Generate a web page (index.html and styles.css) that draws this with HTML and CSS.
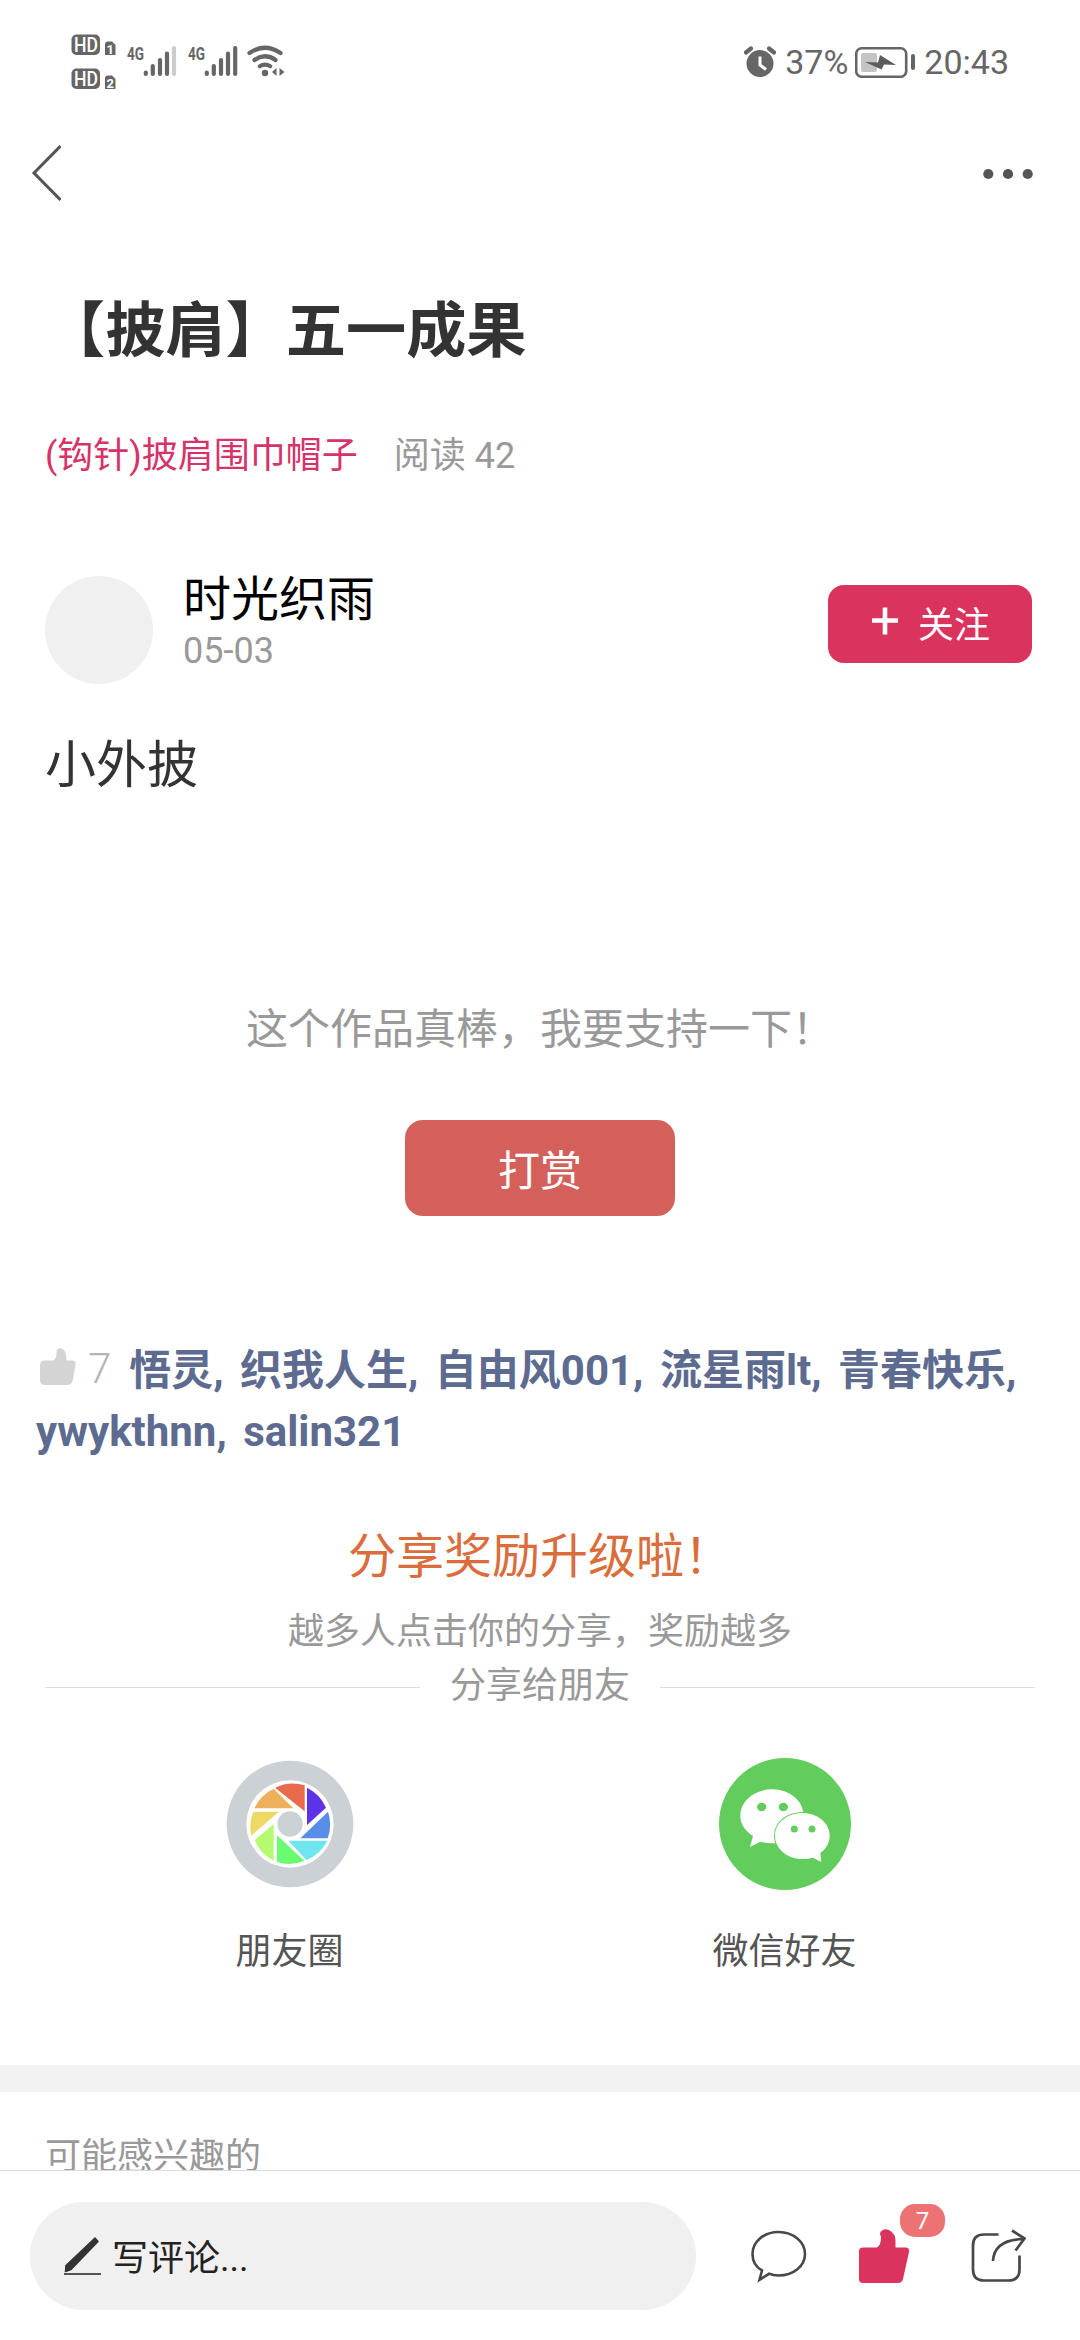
FILE: index.html
```html
<!DOCTYPE html>
<html lang="zh-CN">
<head>
<meta charset="utf-8">
<title>【披肩】五一成果</title>
<link rel="stylesheet" href="styles.css">
</head>
<body>
<div class="screen">
  <div class="viewport">
    <div class="status">
      <svg class="status-left" width="216" height="60" viewBox="71 32 216 60">
        <g fill="#666">
          <rect x="71.5" y="34.5" width="28.5" height="20.5" rx="5"/>
          <rect x="71.5" y="68.5" width="28.5" height="20.5" rx="5"/>
          <path d="M105 44.500q0-3 3-3h4l3.500 3.500v10h-10.500z"/>
          <path d="M105 78.500q0-3 3-3h4l3.500 3.500v10h-10.500z"/>
        </g>
        <g class="hd">
          <text x="74" y="51.500" textLength="24" lengthAdjust="spacingAndGlyphs">HD</text>
          <text x="74" y="85.500" textLength="24" lengthAdjust="spacingAndGlyphs">HD</text>
        </g>
        <g class="sim"><text x="106.500" y="53.500">1</text><text x="106.500" y="87.500">2</text></g>
        <g class="net">
          <text x="127" y="60" textLength="17" lengthAdjust="spacingAndGlyphs">4G</text>
          <text x="188" y="60" textLength="17" lengthAdjust="spacingAndGlyphs">4G</text>
        </g>
        <g stroke="#666" stroke-width="4.200" stroke-linecap="round">
          <path d="M145.800 72.500v1.500M152.800 66v8M160 60v14M167 53.500v20.500M206.800 72.500v1.500M213.800 66v8M221 60v14M228 53.500v20.500M235.200 48v26"/>
          <path d="M174 48v26" stroke="#ccc"/>
        </g>
        <g fill="none" stroke="#666" stroke-width="4.200" stroke-linecap="round">
          <path d="M249.500 53q15.500-10.500 31 0M254.500 60q10.500-7.500 21 0M259.800 66.200q5.200-3 10.400 0"/>
        </g>
        <circle cx="265" cy="73" r="3.200" fill="#666"/>
        <path d="M276.500 68v8l-4.500-4zM279.500 68v8l5-4z" fill="#666"/>
      </svg>
      <div class="status-right">
        <svg width="32" height="32" viewBox="744 45 32 32">
          <circle cx="760" cy="62.500" r="13.500" fill="#666"/>
          <path d="M746 51.500l5-4M774 51.500l-5-4" stroke="#666" stroke-width="4.200" stroke-linecap="round"/>
          <path d="M760 55.500v8.500l6 4.500" fill="none" stroke="#fff" stroke-width="3"/>
        </svg>
        <span class="pct">37%</span>
        <svg width="60" height="32" viewBox="855 45 60 32">
          <rect x="856.200" y="47.200" width="50" height="28.600" rx="5.500" fill="none" stroke="#666" stroke-width="2.600"/>
          <rect x="861" y="52" width="16" height="19" rx="2" fill="#c4c4c4"/>
          <path d="M865 61l13 .5 2-7.500 16 10-12-.5-2.500 5z" fill="#5c5c5c"/>
          <path d="M913 55v12" stroke="#666" stroke-width="4" stroke-linecap="round"/>
        </svg>
        <span class="clock">20:43</span>
      </div>
    </div>

    <div class="nav">
      <svg class="back" width="30" height="56" viewBox="31 145 30 56"><path d="M60.500 146L34 173l26.500 27" fill="none" stroke="#555" stroke-width="3"/></svg>
      <svg width="52" height="12" viewBox="982 168 52 12" fill="#555"><circle cx="988.300" cy="174" r="5.100"/><circle cx="1008" cy="174" r="5.100"/><circle cx="1027.700" cy="174" r="5.100"/></svg>
    </div>

    <h1 class="title">【披肩】五一成果</h1>
    <div class="meta"><a class="tag">(钩针)披肩围巾帽子</a><span>阅读 42</span></div>

    <div class="author">
      <div class="avatar"></div>
      <div class="who">
        <div class="name">时光织雨</div>
        <div class="date">05-03</div>
      </div>
      <button class="follow">
        <svg width="26" height="28" viewBox="0 0 26 28"><path d="M13 .5v27M0 13.500h26" stroke="#fff" stroke-width="4.600"/></svg>
        <span>关注</span>
      </button>
    </div>

    <p class="body">小外披</p>

    <p class="support">这个作品真棒，我要支持一下！</p>
    <button class="reward">打赏</button>

    <div class="likes">
      <svg class="like-icon" width="36" height="37" viewBox="0 0 36 37"><path d="M5 12.500h8.500q3-2 3-8 0-4 3.500-4.500 3 .2 5 3.500 1.800 3.500 1.300 9H32q4 0 3.500 4l-2.500 15q-1 5.500-6 5.500H5q-5 0-5-5V17.500q0-5 5-5z" fill="#d4d4d4"/></svg><span class="count">7</span><b>悟灵,</b> <b>织我人生,</b> <b>自由风001,</b> <b>流星雨lt,</b> <b>青春快乐,</b> <b>ywykthnn,</b> <b>salin321</b>
    </div>

    <div class="share">
      <div class="share-title">分享奖励升级啦！</div>
      <div class="share-sub">越多人点击你的分享，奖励越多</div>
      <div class="divider"><span>分享给朋友</span></div>
      <div class="targets">
        <div class="target">
          <svg width="132" height="132" viewBox="99 83 396 396">
            <circle cx="297" cy="281" r="190" fill="#ccd1d5"/>
            <circle cx="297" cy="281" r="131" fill="#fff"/>
            <path d="M252 172A119 119 0 0 1 341 165V243z" fill="#e96b4c"/>
            <path d="M348 172A119 119 0 0 1 405 232L348 284z" fill="#5c33e6"/>
            <path d="M411 244A119 119 0 0 1 410 324H328z" fill="#568ee8"/>
            <path d="M409 331A119 119 0 0 1 346 389L292 331z" fill="#6ee5ef"/>
            <path d="M340 391A119 119 0 0 1 258 395V315z" fill="#6bfb70"/>
            <path d="M248 391A119 119 0 0 1 191 329L248 282z" fill="#b5fb70"/>
            <path d="M181 316A119 119 0 0 1 187 244H264z" fill="#eed967"/>
            <path d="M190 234A119 119 0 0 1 248 175L307 234z" fill="#efb05c"/>
            <circle cx="297" cy="281" r="38" fill="#ccd1d5"/>
          </svg>
          <span>朋友圈</span>
        </div>
        <div class="target">
          <svg width="132" height="132" viewBox="114 83 396 396">
            <circle cx="312" cy="281" r="198" fill="#62cd5c"/>
            <path d="M273 177c53 0 95 35 95 80s-42 82-95 82q-18 0-35-5l-31 16 9-33c-24-16-38-36-38-60 0-45 42-80 95-80z" fill="#fff"/>
            <path d="M364 248c46 0 82 30 82 68 0 21-11 40-28 52l3 27-25-13q-15 4-32 4c-46 0-82-32-82-70s36-68 82-68z" fill="#fff" stroke="#62cd5c" stroke-width="6" paint-order="stroke"/>
            <g fill="#62cd5c"><ellipse cx="242" cy="230" rx="14" ry="12.500"/><ellipse cx="307" cy="230" rx="14" ry="12.500"/><circle cx="340" cy="296" r="10.500"/><circle cx="393" cy="296" r="10.500"/></g>
          </svg>
          <span>微信好友</span>
        </div>
      </div>
    </div>

    <div class="band"></div>
    <div class="interest">可能感兴趣的</div>
  </div>

  <div class="toolbar">
    <div class="input">
      <svg width="38" height="40" viewBox="0 0 38 40"><path d="M31 2l3 3.500-27 28-5.500 2 .5-6z" fill="#333" stroke="#333" stroke-width="1.500" stroke-linejoin="round"/><path d="M0 38h37" stroke="#555" stroke-width="2"/></svg>
      <span>写评论...</span>
    </div>
    <div class="actions">
      <svg width="58" height="54" viewBox="750 2229 58 54"><path d="M762 2270.500C754 2266 752.500 2259 752.500 2254c0-12 11-22 26-22s26.500 10 26.500 22-11.500 21.500-26.500 21.500q-5 0-9.500-1.700l-9.500 6z" fill="none" stroke="#484848" stroke-width="2.600"/></svg>
      <div class="liked">
        <svg width="51" height="54" viewBox="859 2228 51 54"><path d="M863 2246.500h14q4-2 4-11-2-3 0-5 3-3.500 8-1.500 6.500 4 6.500 10v7.500H906q3.500 0 3 4.500l-6 27q-1 4-5 4H863q-4 0-4-4v-27.500q0-4 4-4z" fill="#da335d"/></svg>
        <span class="badge">7</span>
      </div>
      <svg class="forward" width="56" height="54" viewBox="970 2228 56 54" fill="none" stroke="#484848" stroke-width="2.700"><path d="M998.500 2233.500H984q-11 0-11 11v24q0 11 11 11h24.500q11 0 11-11v-14"/><path d="M993 2260q1-21 29.500-22M1012 2229.500l12.500 8-9 12"/></svg>
    </div>
  </div>
</div>
</body>
</html>
```

FILE: styles.css
```css
* { box-sizing: border-box; margin: 0; padding: 0; }
body {
  width: 1080px;
  background: #fff;
  font-family: Roboto, "Noto Sans CJK SC", sans-serif;
  color: #333;
}
svg { display: block; flex: none; }
button { border: 0; font: inherit; color: #fff; }

.screen { display: flex; flex-direction: column; height: 2340px; overflow: hidden; }
.viewport { height: 2170px; overflow: hidden; flex: none; }

.status {
  display: flex;
  justify-content: space-between;
  height: 120px;
  padding: 32px 71px 0;
}
.status-right { display: flex; align-items: center; height: 59px; color: #666; font-size: 34px; line-height: 40px; }
.pct { margin-left: 9px; margin-right: 7px; }
.clock { margin-left: 9px; }
.hd { font: 500 21px Roboto, sans-serif; fill: #fff; }
.sim { font: 700 13px Roboto, sans-serif; fill: #fff; }
.net { font: 700 19px Roboto, sans-serif; fill: #666; }

.nav {
  display: flex;
  justify-content: space-between;
  align-items: center;
  height: 108px;
  padding: 0 46px 0 31px;
}
.back { margin-bottom: 3px; }

.title { margin-top: 64px; padding-left: 45px; font-size: 60.2px; line-height: 80px; font-weight: 700; }
.meta {
  display: flex;
  gap: 36px;
  margin-top: 59px;
  padding-left: 45px;
  font-size: 36px;
  line-height: 50px;
  color: #999;
}
.tag { color: #d6336a; }

.author { display: flex; align-items: flex-start; margin-top: 91px; padding: 0 48px 0 45px; height: 112px; }
.avatar { width: 108px; height: 108px; margin-top: 4px; border-radius: 50%; background: #f0f0f0; }
.who { margin-left: 30px; flex: 1; }
.name { font-size: 48px; line-height: 56px; color: #000; }
.date { margin-top: 5px; font-size: 36px; line-height: 36px; color: #999; }
.follow {
  display: flex;
  align-items: center;
  gap: 20px;
  width: 204px;
  height: 78px;
  margin-top: 13px;
  padding-left: 44px;
  border-radius: 16px;
  background: #da335d;
  font-size: 36px;
  line-height: 50px;
}
.follow svg { margin-bottom: 7px; }
.follow span { padding-top: 3px; }

.body { margin-top: 52px; padding-left: 45px; font-size: 51px; line-height: 60px; }

.support { margin-top: 209px; text-align: center; font-size: 42px; line-height: 50px; color: #999; }
.reward {
  display: block;
  width: 270px;
  height: 96px;
  margin: 65px auto 0;
  padding-top: 8px;
  border-radius: 18px;
  background: #d4605c;
  font-size: 42px;
  line-height: 50px;
}

.likes { margin-top: 124px; padding: 0 36px; font-size: 42px; line-height: 61px; color: #5d6b91; }
.like-icon { display: inline-block; margin: 0 12px 0 4px; vertical-align: 0; }
.count { color: #b4b4b4; font-weight: 300; margin-right: 18px; vertical-align: 2px; line-height: 1; }
.likes b { margin-right: 6px; font-weight: 700; }

.share { margin-top: 65px; text-align: center; color: #999; font-size: 36px; line-height: 50px; }
.share-title { font-size: 48px; line-height: 60px; color: #db6d3c; }
.share-sub { margin-top: 20px; }
.divider { display: flex; align-items: center; gap: 30px; margin-top: 4px; padding: 0 45px; }
.divider::before, .divider::after { content: ""; flex: 1; height: 1px; margin-top: 2px; background: #dcdcdc; }
.targets { display: grid; grid-template-columns: 1fr 1fr; margin-top: 47px; padding: 0 48px 88px 42px; }
.target { display: flex; flex-direction: column; align-items: center; gap: 37px; color: #555; }

.band { height: 27px; background: #f2f2f2; }
.interest { padding: 40px 45px 0; font-size: 36px; line-height: 50px; color: #999; }

.toolbar {
  display: flex;
  align-items: center;
  height: 170px;
  padding: 0 54px 0 30px;
  border-top: 1px solid #dcdcdc;
  background: #fff;
}
.input {
  display: flex;
  align-items: center;
  gap: 10px;
  width: 666px;
  height: 108px;
  padding-left: 34px;
  border-radius: 54px;
  background: #f0f0f0;
  color: #222;
  font-size: 36px;
  line-height: 50px;
}
.input span { padding-top: 7px; }
.actions { display: flex; flex: 1; padding-left: 54px; }
.liked { position: relative; margin-left: 51px; }
.forward { margin-left: auto; }
.badge {
  position: absolute;
  left: 41px;
  top: -25px;
  width: 45px;
  height: 33px;
  border-radius: 15px;
  background: #ed7273;
  color: #fff;
  font-size: 24px;
  line-height: 34px;
  text-align: center;
}
```
